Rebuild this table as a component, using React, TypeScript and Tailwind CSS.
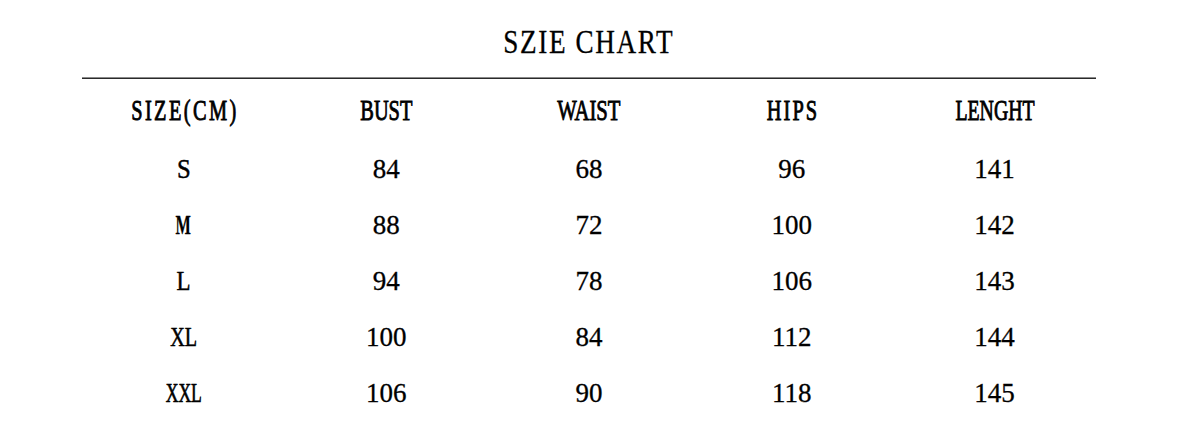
import React from "react";

const headers: { t: string; c: string }[] = [
  { t: "SIZE(CM)", c: "scale-x-[0.68] tracking-[3.5px] pl-[3.5px]" },
  { t: "BUST", c: "scale-x-[0.68]" },
  { t: "WAIST", c: "scale-x-[0.69]" },
  { t: "HIPS", c: "scale-x-[0.68] tracking-[3px] pl-[3px]" },
  { t: "LENGHT", c: "scale-x-[0.66]" },
];

const labelCls: Record<string, string> = {
  S: "scale-x-[0.88] font-normal [-webkit-text-stroke:0.5px_black]",
  M: "scale-x-[0.58] font-bold [-webkit-text-stroke:0.3px_black]",
  L: "scale-x-[0.82] font-normal [-webkit-text-stroke:0.5px_black]",
  XL: "scale-x-[0.72] font-normal [-webkit-text-stroke:0.6px_black]",
  XXL: "scale-x-[0.63] font-normal [-webkit-text-stroke:0.7px_black]",
};

const rows: string[][] = [
  ["S", "84", "68", "96", "141"],
  ["M", "88", "72", "100", "142"],
  ["L", "94", "78", "106", "143"],
  ["XL", "100", "84", "112", "144"],
  ["XXL", "106", "90", "118", "145"],
];

export default function App() {
  return (
    <div className="w-[1180px] h-[435px] bg-white text-black font-['Liberation_Serif','Times_New_Roman',serif] overflow-hidden">
      <div className="ml-[82px] w-[1014px]">
        <div className="h-[77px] flex items-center justify-center pt-[7px]">
          <span className="inline-block text-[34px] leading-none scale-x-[0.8] tracking-[2px] [-webkit-text-stroke:0.3px_black]">SZIE CHART</span>
        </div>
        <div className="h-[2px] bg-[#2a2a2a] border-t border-[#8a8a8a]" />
        <div className="grid grid-cols-5 h-[62px] items-center">
          {headers.map((h) => (
            <div key={h.t} className="flex justify-center">
              <span className={"inline-block text-[30px] leading-none font-normal [-webkit-text-stroke:0.9px_black] " + h.c}>{h.t}</span>
            </div>
          ))}
        </div>
        {rows.map((r) => (
          <div key={r[0]} className="grid grid-cols-5 h-[56px] items-center">
            {r.map((c, i) => (
              <div key={i} className="flex justify-center">
                {i === 0 ? (
                  <span className={"inline-block text-[28px] leading-none " + labelCls[c]}>{c}</span>
                ) : (
                  <span className="inline-block text-[27px] leading-none [-webkit-text-stroke:0.3px_black]">{c}</span>
                )}
              </div>
            ))}
          </div>
        ))}
      </div>
    </div>
  );
}
